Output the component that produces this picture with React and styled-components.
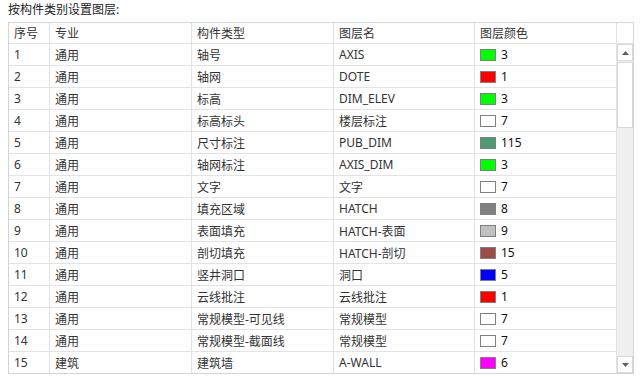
import React from "react";
import styled, { createGlobalStyle } from "styled-components";

const Global = createGlobalStyle`
  html, body { margin: 0; padding: 0; background: #fff; }
  body {
    font-family: "Noto Sans", "Noto Sans CJK SC", sans-serif;
    font-size: 12px;
    color: #333;
  }
`;

const Page = styled.div`
  width: 641px;
  height: 377px;
  padding: 0 8px;
  box-sizing: border-box;
  overflow: hidden;
`;

const Title = styled.div`
  height: 22px;
  line-height: 20px;
  color: #222;
`;

const Table = styled.div`
  width: 626px;
  border: 1px solid #d4d4d4;
  box-sizing: border-box;
  display: flex;
  flex-direction: column;
`;

const cols = [41, 142, 142, 141, 142];

const Row = styled.div`
  display: flex;
  height: ${(p) => p.$h}px;
`;

const Cell = styled.div`
  width: ${(p) => p.$w}px;
  flex: none;
  box-sizing: border-box;
  border-right: ${(p) => (p.$noRight ? "none" : "1px solid #e3e3e3")};
  border-bottom: ${(p) => (p.$noBottom ? "none" : "1px solid #e3e3e3")};
  padding-left: 5px;
  display: flex;
  align-items: center;
  white-space: nowrap;
  overflow: hidden;
  color: #333;
`;

const Body = styled.div`
  display: flex;
`;

const Rows = styled.div`
  display: flex;
  flex-direction: column;
`;

const Scrollbar = styled.div`
  width: 16px;
  background: #f0f0f0;
  display: flex;
  flex-direction: column;
  justify-content: space-between;
`;

const ScrollTop = styled.div`
  display: flex;
  flex-direction: column;
  gap: 1px;
`;

const ArrowBtn = styled.div`
  height: 17px;
  box-sizing: border-box;
  border: 1px solid #d8d8d8;
  background: #fff;
  display: flex;
  align-items: center;
  justify-content: center;
`;

const Thumb = styled.div`
  height: 66px;
  box-sizing: border-box;
  border: 1px solid #d8d8d8;
  background: #fff;
`;

const Swatch = styled.span`
  display: inline-block;
  width: 16px;
  height: 12px;
  box-sizing: border-box;
  border: 1px solid #808080;
  background: ${(p) => p.$c};
  margin-right: 5px;
`;

const Num = styled.span`
  color: #111;
`;

const data = [
  ["1", "通用", "轴号", "AXIS", "#00ff00", "3"],
  ["2", "通用", "轴网", "DOTE", "#ff0000", "1"],
  ["3", "通用", "标高", "DIM_ELEV", "#00ff00", "3"],
  ["4", "通用", "标高标头", "楼层标注", "#ffffff", "7"],
  ["5", "通用", "尺寸标注", "PUB_DIM", "#4c9972", "115"],
  ["6", "通用", "轴网标注", "AXIS_DIM", "#00ff00", "3"],
  ["7", "通用", "文字", "文字", "#ffffff", "7"],
  ["8", "通用", "填充区域", "HATCH", "#808080", "8"],
  ["9", "通用", "表面填充", "HATCH-表面", "#c0c0c0", "9"],
  ["10", "通用", "剖切填充", "HATCH-剖切", "#9c4a4a", "15"],
  ["11", "通用", "竖井洞口", "洞口", "#0000ff", "5"],
  ["12", "通用", "云线批注", "云线批注", "#ff0000", "1"],
  ["13", "通用", "常规模型-可见线", "常规模型", "#ffffff", "7"],
  ["14", "通用", "常规模型-截面线", "常规模型", "#ffffff", "7"],
  ["15", "建筑", "建筑墙", "A-WALL", "#ff00ff", "6"],
];

const headers = ["序号", "专业", "构件类型", "图层名", "图层颜色"];

const Arrow = ({ up }) => (
  <svg width="7" height="4" viewBox="0 0 7 4">
    <polygon points={up ? "3.5,0 7,4 0,4" : "0,0 7,0 3.5,4"} fill="#606060" />
  </svg>
);

export default function App() {
  return (
    <Page>
      <Global />
      <Title>按构件类别设置图层:</Title>
      <Table>
        <Row $h={21}>
          {headers.map((h, i) => (
            <Cell key={h} $w={cols[i]}>
              {h}
            </Cell>
          ))}
          <Cell $w={16} $noRight />
        </Row>
        <Body>
          <Rows>
            {data.map((r, ri) => {
              const last = ri === data.length - 1;
              return (
                <Row key={r[0]} $h={last ? 21 : 22}>
                  <Cell $w={cols[0]} $noBottom={last}>{r[0]}</Cell>
                  <Cell $w={cols[1]} $noBottom={last}>{r[1]}</Cell>
                  <Cell $w={cols[2]} $noBottom={last}>{r[2]}</Cell>
                  <Cell $w={cols[3]} $noBottom={last}>{r[3]}</Cell>
                  <Cell $w={cols[4]} $noBottom={last}>
                    <Swatch $c={r[4]} />
                    <Num>{r[5]}</Num>
                  </Cell>
                </Row>
              );
            })}
          </Rows>
          <Scrollbar>
            <ScrollTop>
              <ArrowBtn>
                <Arrow up />
              </ArrowBtn>
              <Thumb />
            </ScrollTop>
            <ArrowBtn>
              <Arrow />
            </ArrowBtn>
          </Scrollbar>
        </Body>
      </Table>
    </Page>
  );
}
